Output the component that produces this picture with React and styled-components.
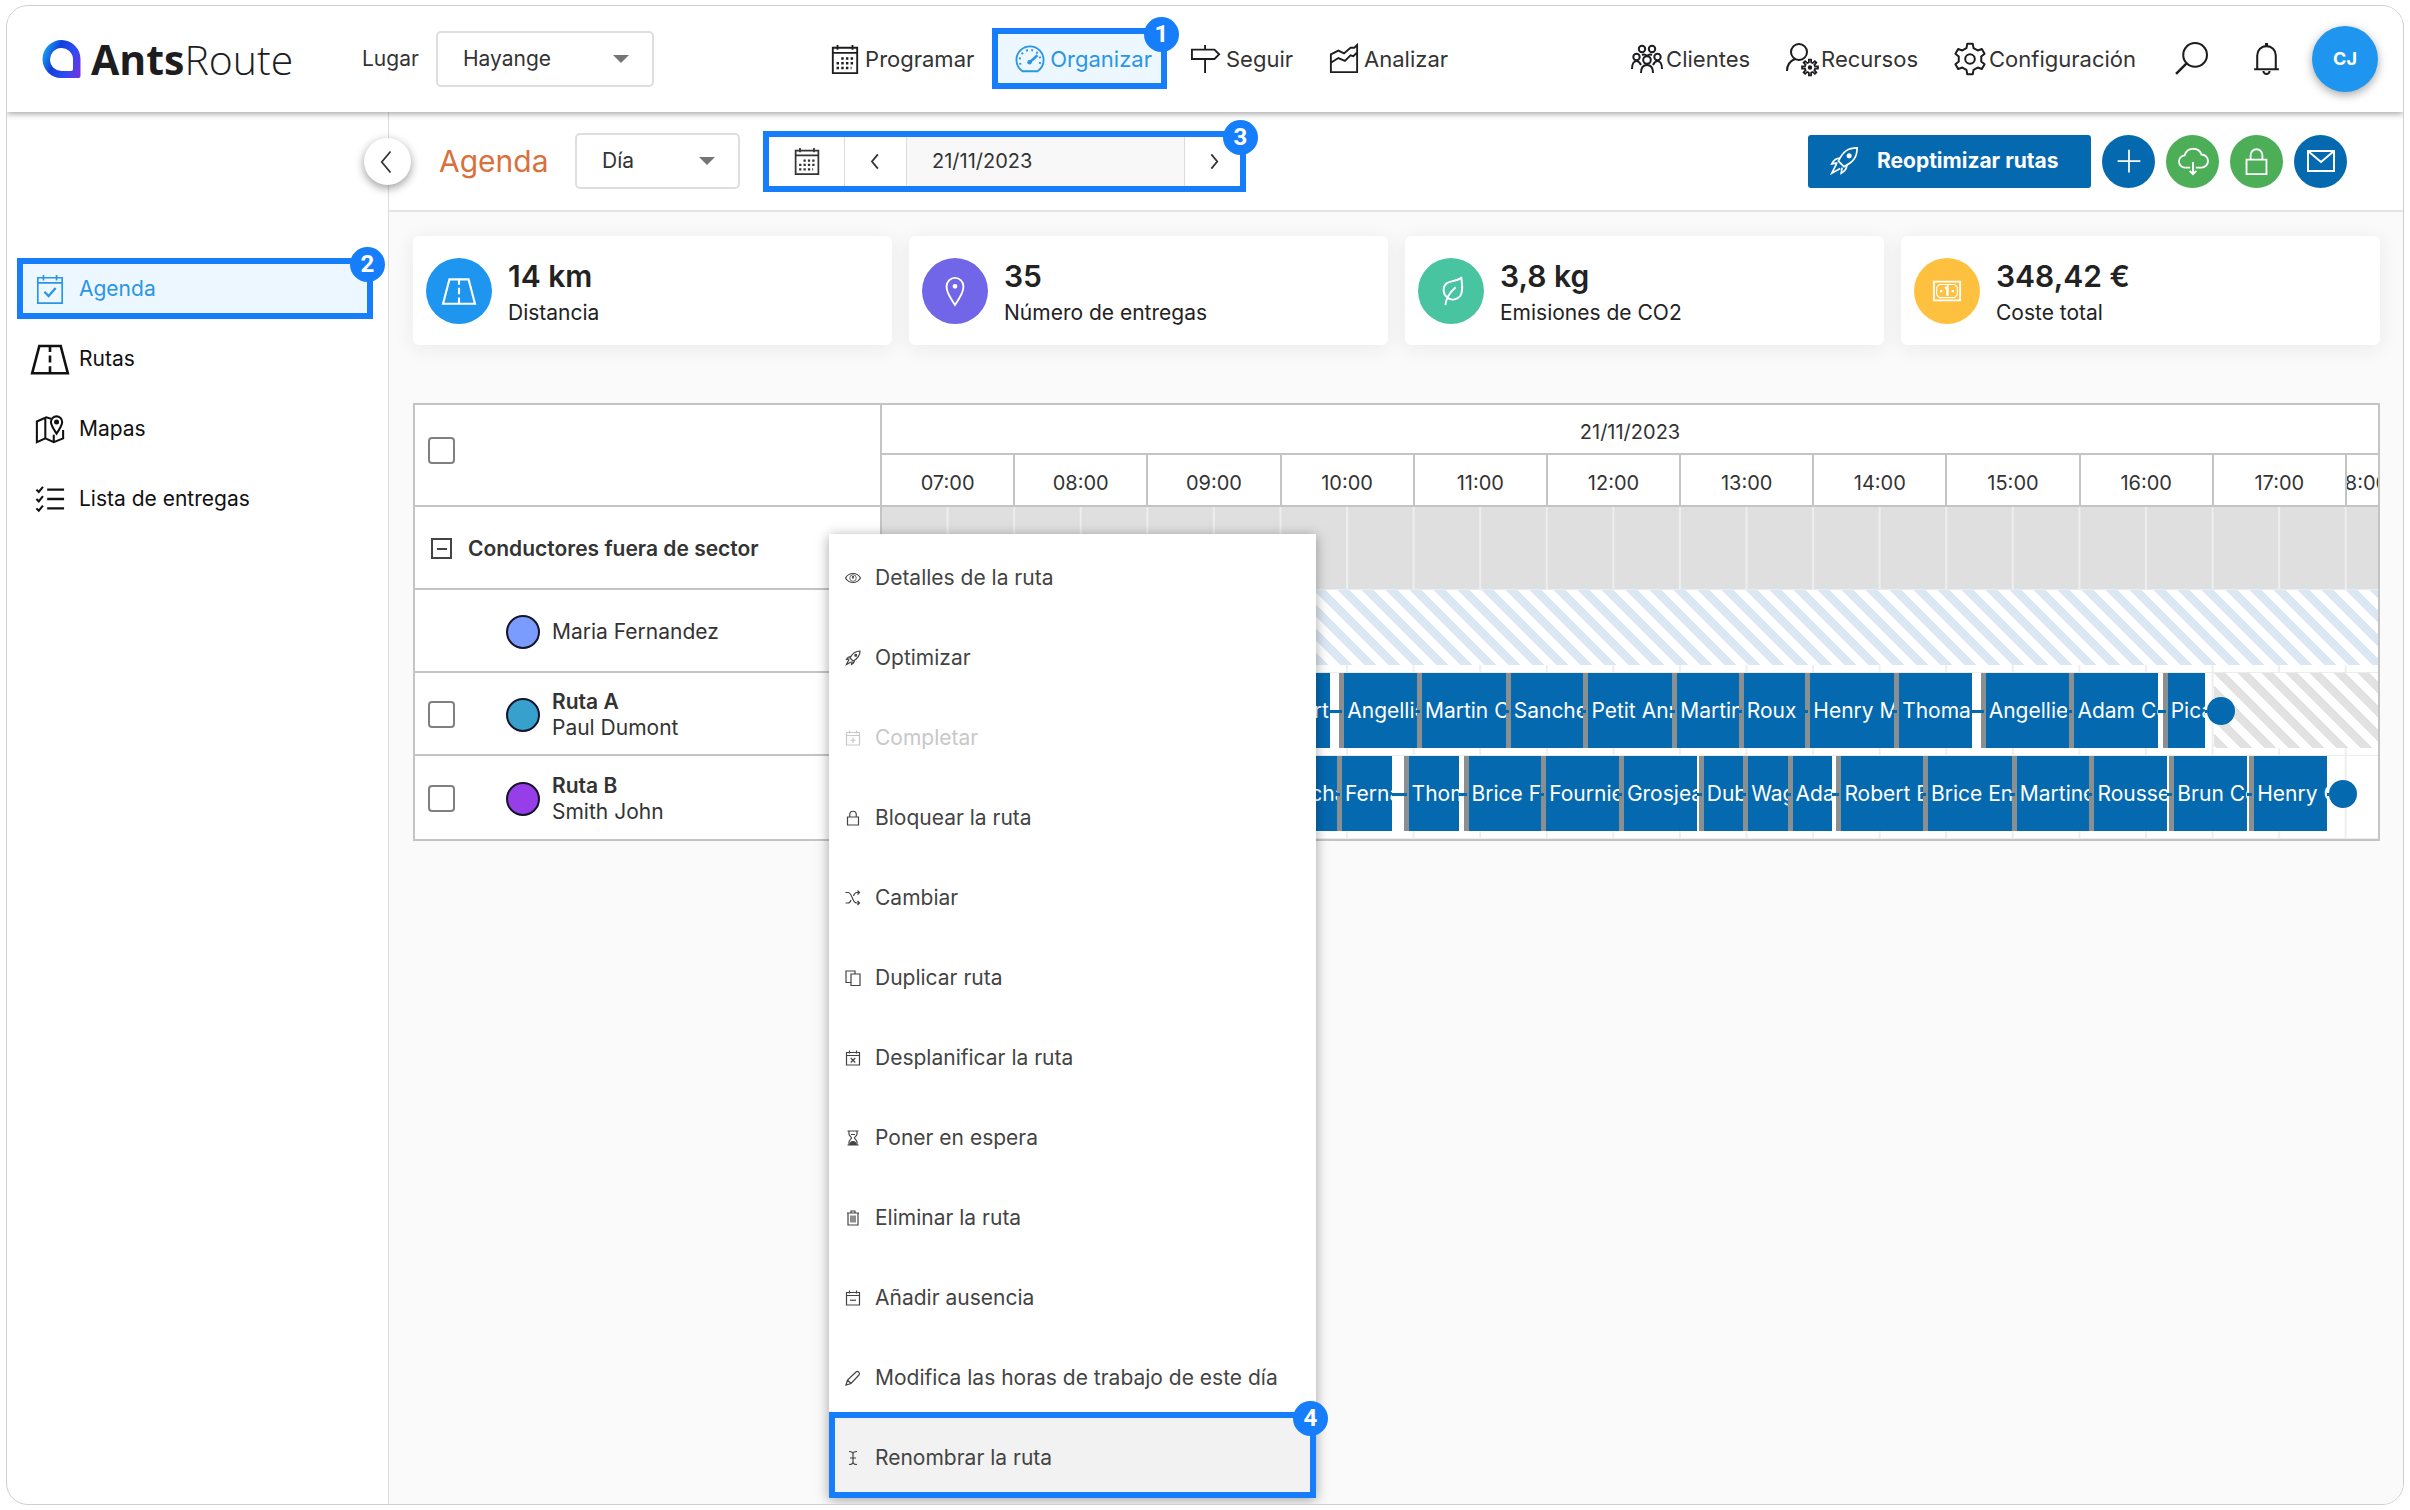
import React, { useState } from 'react';
import styled, { createGlobalStyle, css } from 'styled-components';

const BLUE = '#0569b0';
const ACCENT = '#167efb';
const LINE = '#c4c4c4';

// timeline starts at 07:00 and shows 674 minutes
const TOTAL_MINUTES = 674;
const pct = (minutes) => `${(minutes / TOTAL_MINUTES) * 100}%`;

const gearPath = (cx, cy, outer, inner, teeth) => {
  const points = [];
  const step = (Math.PI * 2) / teeth;
  for (let i = 0; i < teeth; i += 1) {
    const a = i * step - Math.PI / 2;
    [[-0.3, inner], [-0.17, outer], [0.17, outer], [0.3, inner]].forEach(([k, r]) => {
      points.push(`${(cx + r * Math.cos(a + k * step)).toFixed(2)} ${(cy + r * Math.sin(a + k * step)).toFixed(2)}`);
    });
  }
  return `M${points.join('L')}Z`;
};

const calendarFrame = (
  <>
    <path d="M3 5h26v25H3z" />
    <path d="M3 11h26M9 1v6M23 1v6" />
  </>
);

const icons = {
  calendar: (
    <>
      <path d="M3 4h26v27H3zM3 9.500h26M8 1v5M24 1v5" />
      <path d="M12 15.500h15M7 20.500h20M7 25.500h16" strokeDasharray="2.600 2.400" strokeWidth="2.600" />
    </>
  ),
  gauge: (
    <>
      <path d="M8 29C3.500 26 1.500 21.500 1.500 17a14.500 14.500 0 0 1 29 0c0 4.500-2 9-6.500 12z" />
      <path d="M6 22a11 11 0 1 1 20 0" strokeDasharray="2 3.800" strokeWidth="2.200" />
      <path d="M15 20l9-8" strokeWidth="2.600" />
      <circle cx="15.500" cy="19.500" r="2.400" fill="currentColor" stroke="none" />
    </>
  ),
  signpost: <path d="M1 6h24l5 5-5 5H1zM15 1v5M15 16v15" />,
  chart: <path d="M2 11l8-4 6 3 7-6 4 0 3-3v29H2zM2 20l8-5 7 3 6-6 3 1 4-4" />,
  group: (
    <>
      <circle cx="11" cy="6" r="3.200" />
      <circle cx="21" cy="6" r="3.200" />
      <circle cx="5.500" cy="14" r="3.200" />
      <circle cx="26.500" cy="14" r="3.200" />
      <circle cx="16" cy="17" r="3.800" />
      <path d="M1 26c0-5 2-8 4.500-8s3.500 2 4.500 4M31 26c0-5-2-8-4.500-8s-3.500 2-4.500 4M10 30c0-5 2-8 6-8s6 3 6 8M11 12c2-1 3-1 5 1M21 12c-2-1-3-1-5 1" />
    </>
  ),
  userCog: (
    <>
      <circle cx="13" cy="9" r="8" />
      <path d="M9 16C4 18 1 22 1 28" />
      <path d={gearPath(24, 24.5, 8, 5.2, 8)} strokeWidth="1.800" />
      <circle cx="24" cy="24.500" r="1.200" fill="currentColor" />
    </>
  ),
  cog: (
    <>
      <path d={gearPath(16, 16, 15.5, 11.5, 6)} strokeLinejoin="round" />
      <circle cx="16" cy="16" r="4.800" />
    </>
  ),
  search: (
    <>
      <circle cx="19.500" cy="12.500" r="11.500" />
      <path d="M11 21L1 31" strokeWidth="2.400" />
    </>
  ),
  bell: (
    <>
      <path d="M7 26V13a9 9 0 0 1 18 0v13M4 26.500h24M13 28a3 3 0 0 0 6 0" />
      <path d="M16 1v3" strokeWidth="3" />
    </>
  ),
  calendarCheck: (
    <>
      <path d="M3 4h26v27H3zM3 9.500h26M9 1v6M23 1v6" />
      <path d="M10 19l4.500 4.500L22 15" strokeWidth="2.400" />
    </>
  ),
  road: (
    <>
      <path d="M7 5h18l6 23H1z" />
      <path d="M16 5v5M16 13v6M16 22v6" />
    </>
  ),
  map: (
    <>
      <path d="M17 5l-5-1.500L2 8v22l9-4 9 4 10-4V17M11 5v21M20 22v8" />
      <path d="M23 21c-4-6-6-9-6-12.500a6 6 0 0 1 12 0C29 12 27 15 23 21z" />
      <circle cx="23" cy="8.500" r="1.600" fill="currentColor" />
    </>
  ),
  list: (
    <>
      <path d="M13 6h18M13 16h18M13 26h18" strokeWidth="2.600" />
      <path d="M1.500 6l2.500 2.500L8.500 3M1.500 16l2.500 2.500L8.500 13M1.500 26l2.500 2.500L8.500 23" />
    </>
  ),
  rocket: (
    <>
      <path d="M30 2C20 2 15 6 10 16l6 6C26 17 30 12 30 2z" />
      <circle cx="21.500" cy="10.500" r="1.800" fill="currentColor" />
      <path d="M12 13c-5 0-7 2-9 6l6-1M19 20c0 5-2 7-6 9l1-6M8 19l-5 10 9-5" />
    </>
  ),
  plus: <path d="M16 3v26M3 16h26" />,
  cloud: (
    <>
      <path d="M13 23H8a6.500 6.500 0 0 1-1-13 9.500 9.500 0 0 1 18-1 7 7 0 0 1 0 14h-6" />
      <path d="M16 17v13M12.500 26.500L16 30l3.500-3.500" />
    </>
  ),
  lock: <path d="M5 14h22v16H5zM9.500 14V9a6.500 6.500 0 0 1 13 0v5" />,
  mail: <path d="M3 6h26v20H3zM3 6l13 11L29 6" />,
  pin: (
    <>
      <path d="M16 31C9 20 7 16 7 11a9 9 0 0 1 18 0c0 5-2 9-9 20z" />
      <circle cx="16" cy="11" r="1.600" fill="currentColor" />
    </>
  ),
  leaf: (
    <path d="M27 2c1 8 2 14-1 19-3 4-9 6-14 2-5-4-5-11-1-15 4-3 10-2 16-6zM21 12c-7 6-10 11-11 19" />
  ),
  money: (
    <>
      <path d="M2 6h28v20H2z" />
      <path d="M8 9h16l3 3v8l-3 3H8l-3-3v-8z" strokeWidth="1.200" />
      <path d="M14 13.500l2.500-2V21" strokeWidth="2.600" />
      <path d="M8.500 16h2.500M21 16h2.500" strokeWidth="2.400" />
    </>
  ),
  eye: (
    <>
      <path d="M1 16C5 9 10 7 16 7s11 2 15 9c-4 7-9 9-15 9S5 23 1 16z" />
      <circle cx="16" cy="16" r="6.500" strokeWidth="1.600" />
      <path d="M16 12v5" strokeWidth="3.600" />
    </>
  ),
  calendarPlus: (
    <>
      {calendarFrame}
      <path d="M16 15v11M10.500 20.500h11" />
    </>
  ),
  calendarTimes: (
    <>
      {calendarFrame}
      <path d="M11.500 16l9 9M20.500 16l-9 9" />
    </>
  ),
  calendarMinus: (
    <>
      {calendarFrame}
      <path d="M10 20.500h12" />
    </>
  ),
  shuffle: (
    <path d="M1 5h5c9 0 8 21 17 21h6M1 26h5c3 0 5-3 6-6M17 12c1-4 3-7 7-7h5M25 1l4 4-4 4M25 22l4 4-4 4" />
  ),
  copy: <path d="M12 8h18v23H12zM12 25H2V2h18v6" />,
  hourglass: (
    <>
      <path d="M5 2h22M5 30h22M8 2v6c0 4 5 6 5 8s-5 4-5 8v6M24 2v6c0 4-5 6-5 8s5 4 5 8v6" />
      <path d="M10 29c0-4 3-6 6-6s6 2 6 6zM12 9h8" fill="currentColor" />
    </>
  ),
  trash: <path d="M4 6h24M12 5V2h8v3M6 6v24h20V6M12 11v14M16 11v14M20 11v14" />,
  pen: <path d="M2 30l3-10L22 4c3-4 9 2 6 6L12 27zM5 20l7 7" />,
  cursor: <path d="M8 3c4 0 8 1 8 5v16c0 4-4 5-8 5M24 3c-4 0-8 1-8 5M24 29c-4 0-8-1-8-5M10 16h12" />,
  left: <path d="M20 4L10 16l10 12" />,
  right: <path d="M14 4l10 12-10 12" />,
};

const Icon = ({ name, size = 32, weight = 2 }) => (
  <Svg viewBox="0 0 32 32" width={size} height={size} strokeWidth={weight} aria-hidden="true">
    {icons[name]}
  </Svg>
);

const Logo = () => (
  <LogoLink href="#inicio">
    <svg width="39" height="38" viewBox="0 0 39 38" aria-hidden="true">
      <defs>
        <linearGradient id="logo" x1="0" y1="0.3" x2="1" y2="0.7">
          <stop offset="0" stopColor="#17a6f2" />
          <stop offset="0.35" stopColor="#1240dc" />
          <stop offset="0.7" stopColor="#2b4cf5" />
          <stop offset="1" stopColor="#6a35e0" />
        </linearGradient>
      </defs>
      <path
        fill="url(#logo)"
        fillRule="evenodd"
        d="M19 38A19 19 0 1 1 38.500 19V36a2 2 0 0 1-2 2zM20 31h9a2 2 0 0 0 2-2V19a11.500 11.500 0 1 0-11 12z"
      />
    </svg>
    <LogoText><b>Ants</b>Route</LogoText>
  </LogoLink>
);

const mainLinks = [
  { icon: 'calendar', label: 'Programar' },
  { icon: 'gauge', label: 'Organizar', step: 1 },
  { icon: 'signpost', label: 'Seguir' },
  { icon: 'chart', label: 'Analizar' },
];

const accountLinks = [
  { icon: 'group', label: 'Clientes' },
  { icon: 'userCog', label: 'Recursos' },
  { icon: 'cog', label: 'Configuración' },
];

const sideLinks = [
  { icon: 'calendarCheck', label: 'Agenda', step: 2 },
  { icon: 'road', label: 'Rutas' },
  { icon: 'map', label: 'Mapas' },
  { icon: 'list', label: 'Lista de entregas' },
];

const stats = [
  { icon: 'road', color: '#1e96f0', value: '14 km', label: 'Distancia' },
  { icon: 'pin', color: '#7166e8', value: '35', label: 'Número de entregas' },
  { icon: 'leaf', color: '#48c4a0', value: '3,8 kg', label: 'Emisiones de CO2' },
  { icon: 'money', color: '#fdc13f', value: '348,42 €', label: 'Coste total' },
];

const hours = [7, 8, 9, 10, 11, 12, 13, 14, 15, 16, 17, 18];

// [start, end, customer] in minutes after 07:00
const routes = [
  {
    name: 'Ruta A',
    driver: 'Paul Dumont',
    color: '#38a0cc',
    end: 597,
    off: 600,
    stops: [
      [168, 202, 'Robert'],
      [206, 241, 'Angellier'],
      [241, 281, 'Martin Camille'],
      [281, 316, 'Sanchez'],
      [316, 356, 'Petit Anna'],
      [356, 386, 'Martin'],
      [386, 416, 'Roux'],
      [416, 456, 'Henry Marc'],
      [456, 491, 'Thomas'],
      [495, 535, 'Angellier'],
      [535, 575, 'Adam Céline'],
      [577, 596, 'Picard'],
    ],
  },
  {
    name: 'Ruta B',
    driver: 'Smith John',
    color: '#963ee8',
    end: 652,
    stops: [
      [181, 205, 'Richard'],
      [205, 230, 'Fernandez'],
      [235, 260, 'Thomas'],
      [262, 297, 'Brice Fabien'],
      [297, 332, 'Fournier'],
      [332, 367, 'Grosjean'],
      [368, 388, 'Dubois'],
      [388, 408, 'Wagner'],
      [408, 428, 'Adam'],
      [430, 469, 'Robert Elise'],
      [469, 509, 'Brice Enzo'],
      [509, 544, 'Martinez'],
      [544, 579, 'Rousseau'],
      [580, 615, 'Brun Céline'],
      [616, 651, 'Henry Claire'],
    ],
  },
];

const menuItems = [
  { icon: 'eye', label: 'Detalles de la ruta' },
  { icon: 'rocket', label: 'Optimizar' },
  { icon: 'calendarPlus', label: 'Completar', disabled: true },
  { icon: 'lock', label: 'Bloquear la ruta' },
  { icon: 'shuffle', label: 'Cambiar' },
  { icon: 'copy', label: 'Duplicar ruta' },
  { icon: 'calendarTimes', label: 'Desplanificar la ruta' },
  { icon: 'hourglass', label: 'Poner en espera' },
  { icon: 'trash', label: 'Eliminar la ruta' },
  { icon: 'calendarMinus', label: 'Añadir ausencia' },
  { icon: 'pen', label: 'Modifica las horas de trabajo de este día' },
  { icon: 'cursor', label: 'Renombrar la ruta', step: 4 },
];

const Header = () => (
  <TopBar>
    <TopGroup>
      <Logo />
      <FieldLabel htmlFor="lugar">Lugar</FieldLabel>
      <SelectBox $width={218}>
        <select id="lugar" defaultValue="Hayange">
          <option>Hayange</option>
        </select>
      </SelectBox>
    </TopGroup>
    <TopNav $gap={5} $main>
      {mainLinks.map(({ icon, label, step }) => (
        <NavLink key={label} href={`#${label}`} $active={!!step}>
          <Icon name={icon} size={30} />
          {label}
          {step && <StepBadge>{step}</StepBadge>}
        </NavLink>
      ))}
    </TopNav>
    <TopNav $gap={3}>
      {accountLinks.map(({ icon, label }) => (
        <NavLink key={label} href={`#${label}`}>
          <Icon name={icon} size={32} />
          {label}
        </NavLink>
      ))}
      <PlainButton aria-label="Buscar"><Icon name="search" size={33} /></PlainButton>
      <PlainButton aria-label="Notificaciones"><Icon name="bell" size={33} /></PlainButton>
      <Avatar>CJ</Avatar>
    </TopNav>
  </TopBar>
);

const Sidebar = () => (
  <Side>
    {sideLinks.map(({ icon, label, step }) => (
      <SideLink key={label} href={`#${label}`} $active={!!step}>
        <Icon name={icon} size={icon === 'road' ? 38 : 30} weight={step ? 1.8 : 2.2} />
        <span>{label}</span>
        {step && <StepBadge>{step}</StepBadge>}
      </SideLink>
    ))}
  </Side>
);

const Toolbar = () => {
  const [date, setDate] = useState('21/11/2023');

  return (
    <Bar>
      <Title>Agenda</Title>
      <SelectBox $width={165}>
        <select aria-label="Vista" defaultValue="Día">
          <option>Día</option>
        </select>
      </SelectBox>
      <DateGroup>
        <DateButton $width={76} aria-label="Calendario"><Icon name="calendar" size={28} /></DateButton>
        <DateButton $width={62} aria-label="Día anterior"><Icon name="left" size={19} weight={3} /></DateButton>
        <input aria-label="Fecha" value={date} onChange={(e) => setDate(e.target.value)} />
        <DateButton $width={56} aria-label="Día siguiente"><Icon name="right" size={19} weight={3} /></DateButton>
        <StepBadge>3</StepBadge>
      </DateGroup>
      <Actions>
        <PrimaryButton>
          <Icon name="rocket" size={30} weight={1.8} />
          Reoptimizar rutas
        </PrimaryButton>
        <RoundButton $color={BLUE} aria-label="Añadir"><Icon name="plus" size={28} /></RoundButton>
        <RoundButton $color="#4caf58" aria-label="Descargar"><Icon name="cloud" size={30} /></RoundButton>
        <RoundButton $color="#4caf58" aria-label="Bloquear"><Icon name="lock" size={29} /></RoundButton>
        <RoundButton $color={BLUE} aria-label="Enviar"><Icon name="mail" size={32} /></RoundButton>
      </Actions>
    </Bar>
  );
};

const RouteRow = ({ route }) => {
  const first = route.stops[0][0];

  return (
    <tr>
      <td>
        <Resource>
          <Check type="checkbox" aria-label={route.name} />
          <Dot $color={route.color} />
          <div>
            <b>{route.name}</b>
            <br />
            {route.driver}
          </div>
        </Resource>
      </td>
      <td>
        <Track>
          {route.off && (
            <Stripes $color="#e2e2e2" style={{ left: pct(route.off), width: pct(TOTAL_MINUTES - route.off) }} />
          )}
          <Connector style={{ left: pct(first), width: pct(route.end - first) }} />
          {route.stops.map(([start, end, name]) => (
            <Stop key={start} style={{ left: pct(start), width: pct(end - start) }}>
              <span>{name}</span>
            </Stop>
          ))}
          <EndPoint style={{ left: pct(route.end) }} />
        </Track>
      </td>
    </tr>
  );
};

const Planning = () => (
  <Gantt>
    <table>
      <colgroup>
        <ResourceCol />
        <col />
      </colgroup>
      <thead>
        <tr>
          <th rowSpan={2}>
            <Resource $head><Check type="checkbox" aria-label="Seleccionar todo" /></Resource>
          </th>
          <DateHead>21/11/2023</DateHead>
        </tr>
        <tr>
          <th>
            <Hours>
              {hours.map((h) => (
                <div key={h}><span>{`${String(h).padStart(2, '0')}:00`}</span></div>
              ))}
            </Hours>
          </th>
        </tr>
      </thead>
      <tbody>
        <tr>
          <td>
            <Resource>
              <Collapse aria-label="Contraer" />
              <b>Conductores fuera de sector</b>
            </Resource>
          </td>
          <td><Track $group /></td>
        </tr>
        <tr>
          <td>
            <Resource $indent>
              <Dot $color="#7a9cff" />
              Maria Fernandez
            </Resource>
          </td>
          <td>
            <Track>
              <Stripes $color="#dbe8f3" style={{ left: 0, width: '100%' }} />
            </Track>
          </td>
        </tr>
        {routes.map((route) => <RouteRow key={route.name} route={route} />)}
      </tbody>
    </table>
  </Gantt>
);

const App = () => (
  <>
    <GlobalStyle />
    <Frame>
      <Header />
      <Body>
        <Sidebar />
        <Main>
          <FoldButton aria-label="Plegar menú"><Icon name="left" size={28} /></FoldButton>
          <Toolbar />
          <Content>
            <Cards>
              {stats.map(({ icon, color, value, label }) => (
                <Card key={label}>
                  <CardIcon $color={color}><Icon name={icon} size={icon === 'road' ? 34 : 30} /></CardIcon>
                  <CardBody>
                    <CardValue>{value}</CardValue>
                    <CardLabel>{label}</CardLabel>
                  </CardBody>
                </Card>
              ))}
            </Cards>
            <Planning />
          </Content>
          <Menu role="menu">
            {menuItems.map(({ icon, label, disabled, step }) => (
              <MenuItem key={label} role="menuitem" disabled={disabled} $active={!!step}>
                <Icon name={icon} size={16} weight={2.4} />
                {label}
                {step && <StepBadge>{step}</StepBadge>}
              </MenuItem>
            ))}
          </Menu>
        </Main>
      </Body>
    </Frame>
  </>
);

export default App;


const GlobalStyle = createGlobalStyle`
  * {
    box-sizing: border-box;
  }
  body {
    margin: 0;
    background: #fff;
    color: #333;
    font-family: Inter, 'Open Sans', sans-serif;
    font-size: 21px;
    line-height: 26px;
  }
  button, input, select {
    font: inherit;
    color: inherit;
  }
  button {
    border: 0;
    padding: 0;
    background: none;
    cursor: pointer;
  }
  a {
    color: inherit;
    text-decoration: none;
  }
  b {
    font-weight: 600;
  }
`;

const Svg = styled.svg`
  flex: none;
  display: block;
  fill: none;
  stroke: currentColor;
  overflow: visible;
`;

const Frame = styled.div`
  display: flex;
  flex-direction: column;
  min-height: calc(100vh - 10px);
  margin: 5px 6px;
  border: 1px solid #cfcfcf;
  border-radius: 22px;
  overflow: hidden;
`;

const highlight = css`
  border: 6px solid ${ACCENT};
`;

const StepBadge = styled.span`
  position: absolute;
  top: -17px;
  right: -18px;
  z-index: 2;
  width: 35px;
  height: 35px;
  border-radius: 50%;
  background: ${ACCENT};
  color: #fff;
  font: 700 24px/35px Roboto, sans-serif;
  text-align: center;
`;

const TopBar = styled.header`
  position: relative;
  z-index: 1;
  display: flex;
  align-items: center;
  justify-content: space-between;
  height: 106px;
  padding: 0 25px 1px 35px;
  background: #fff;
  box-shadow: 0 2px 6px rgba(0, 0, 0, 0.35);
`;

const TopGroup = styled.div`
  display: flex;
  align-items: center;
`;

const LogoLink = styled.a`
  display: flex;
  align-items: center;
  gap: 10px;
  width: 320px;
  color: #1d1d1f;
`;

const LogoText = styled.span`
  font: 300 41px/48px 'Open Sans', sans-serif;

  b {
    font-weight: 700;
  }
`;

const FieldLabel = styled.label`
  width: 74px;
`;

const SelectBox = styled.div`
  position: relative;
  width: ${({ $width }) => $width}px;

  select {
    width: 100%;
    height: 56px;
    padding: 0 25px;
    border: 2px solid #dedede;
    border-radius: 5px;
    background: #fff;
    appearance: none;
  }

  &::after {
    content: '';
    position: absolute;
    top: 24px;
    right: 25px;
    border: 8px solid transparent;
    border-top-color: #757575;
    border-bottom: 0;
    pointer-events: none;
  }
`;

const NavLink = styled.a`
  position: relative;
  display: flex;
  align-items: center;
  height: 61px;
  padding: 0 18px;
  font-size: 22px;

  svg {
    color: #1d1d1f;
  }

  ${({ $active }) => $active && css`
    ${highlight}
    margin-right: 6px;
    padding: 0 9px 0 17px;
    background: #ecf7ff;
    color: #2b95e6;

    svg {
      color: inherit;
    }
  `}
`;

const TopNav = styled.nav`
  display: flex;
  align-items: center;
  margin-left: ${({ $main }) => ($main ? 11 : 0)}px;

  ${NavLink} {
    gap: ${({ $gap }) => $gap}px;
  }
`;

const PlainButton = styled.button`
  padding: 0 21px;
  color: #1d1d1f;
`;

const Avatar = styled.button`
  width: 66px;
  height: 66px;
  margin-left: 8px;
  border-radius: 50%;
  background: #1e96f0;
  box-shadow: 0 3px 10px rgba(0, 0, 0, 0.35);
  color: #fff;
  font-size: 18px;
  font-weight: 700;
`;

const Body = styled.div`
  flex: 1;
  display: grid;
  grid-template-columns: 382px 1fr;
`;

const Side = styled.nav`
  display: flex;
  flex-direction: column;
  gap: 9px;
  padding: 146px 15px 0 10px;
  border-right: 1px solid #dcdcdc;
`;

const SideLink = styled.a`
  position: relative;
  display: flex;
  align-items: center;
  gap: 10px;
  height: 61px;
  padding-left: 14px;
  color: #111;

  svg {
    width: 38px;
  }

  ${({ $active }) => $active && css`
    ${highlight}
    padding-left: 8px;
    background: #ecf7ff;
    color: #2b95e6;
  `}
`;

const Main = styled.main`
  position: relative;
  background: #fafafa;
`;

const FoldButton = styled.button`
  position: absolute;
  top: 26px;
  left: -25px;
  z-index: 1;
  display: flex;
  align-items: center;
  justify-content: center;
  width: 47px;
  height: 47px;
  padding-right: 2px;
  border-radius: 50%;
  background: #fff;
  box-shadow: 0 3px 10px rgba(0, 0, 0, 0.4);
`;

const Bar = styled.div`
  display: flex;
  align-items: center;
  height: 100px;
  padding: 0 56px 0 50px;
  border-bottom: 2px solid #e4e4e4;
  background: #fff;
`;

const Title = styled.h1`
  width: 136px;
  margin: 0;
  color: #d9703c;
  font-size: 30px;
  font-weight: 400;
`;

const DateGroup = styled.div`
  ${highlight}
  position: relative;
  display: flex;
  width: 483px;
  height: 61px;
  margin-left: 23px;

  input {
    flex: 1;
    min-width: 0;
    padding: 0 25px;
    border: 0;
    background: #f8f8f8;
    font-size: 20px;
  }
`;

const DateButton = styled.button`
  display: flex;
  align-items: center;
  justify-content: center;
  width: ${({ $width }) => $width}px;
  border-right: 1px solid #dcdcdc;

  input + & {
    border-right: 0;
    border-left: 1px solid #dcdcdc;
  }
`;

const Actions = styled.div`
  display: flex;
  gap: 11px;
  margin-left: auto;
`;

const PrimaryButton = styled.button`
  display: flex;
  align-items: center;
  gap: 18px;
  width: 283px;
  height: 53px;
  padding-left: 21px;
  border-radius: 3px;
  background: ${BLUE};
  color: #fff;
  font-weight: 700;
`;

const RoundButton = styled.button`
  display: flex;
  align-items: center;
  justify-content: center;
  width: 53px;
  height: 53px;
  border-radius: 50%;
  background: ${({ $color }) => $color};
  color: #fff;
`;

const Content = styled.div`
  padding: 24px 23px 24px 24px;
`;

const Cards = styled.div`
  display: grid;
  grid-template-columns: repeat(4, 1fr);
  gap: 17px;
`;

const Card = styled.section`
  display: flex;
  align-items: center;
  gap: 16px;
  height: 109px;
  padding: 0 13px;
  border-radius: 6px;
  background: #fff;
  box-shadow: 0 3px 20px rgba(40, 40, 80, 0.08);
`;

const CardIcon = styled.div`
  display: flex;
  align-items: center;
  justify-content: center;
  width: 66px;
  height: 66px;
  border-radius: 50%;
  background: ${({ $color }) => $color};
  color: #fff;
`;

const CardBody = styled.div`
  padding-top: 2px;
`;

const CardValue = styled.div`
  color: #222;
  font-size: 30px;
  font-weight: 600;
  line-height: 36px;
`;

const CardLabel = styled.div`
  margin-top: 6px;
  color: #222;
`;

const Gantt = styled.section`
  margin-top: 58px;
  border: 2px solid ${LINE};
  background: #fff;

  table {
    width: 100%;
    table-layout: fixed;
    border-collapse: separate;
    border-spacing: 0;
  }

  th, td {
    padding: 0;
    font-weight: 400;
    text-align: left;
  }

  th {
    border-bottom: 2px solid ${LINE};
    vertical-align: top;
  }

  th:first-child[rowspan], td:first-child {
    border-right: 2px solid ${LINE};
  }

  td:first-child {
    border-bottom: 2px solid ${LINE};
  }

  tr:last-child td:first-child {
    border-bottom: 0;
  }
`;

const ResourceCol = styled.col`
  width: 467px;
`;

const DateHead = styled.th`
  height: 50px;
  font-size: 20px;

  && {
    padding-top: 14px;
    text-align: center;
  }
`;

const Hours = styled.div`
  display: grid;
  grid-template-columns: repeat(11, 60fr) 14fr;
  height: 50px;
  font-size: 20px;

  div {
    display: flex;
    align-items: center;
    justify-content: center;
    min-width: 0;
    padding-top: 5px;
    overflow: hidden;
    border-right: 2px solid ${LINE};
  }

  div:last-child {
    border-right: 0;
  }
`;

const Resource = styled.div`
  display: flex;
  align-items: center;
  height: ${({ $head }) => ($head ? 88 : 81)}px;
  padding-top: 2px;
  padding-left: ${({ $indent }) => ($indent ? 91 : 13)}px;
`;

const Check = styled.input`
  flex: none;
  width: 27px;
  height: 27px;
  margin: 0 51px 0 0;
  border: 2px solid #808080;
  border-radius: 4px;
  background: #fff;
  appearance: none;
`;

const Collapse = styled.button`
  display: flex;
  align-items: center;
  justify-content: center;
  width: 21px;
  height: 21px;
  margin: 0 16px 0 3px;
  border: 2px solid #444;

  &::after {
    content: '';
    width: 10px;
    height: 2px;
    background: #444;
  }
`;

const Dot = styled.span`
  flex: none;
  width: 34px;
  height: 34px;
  margin-right: 12px;
  border: 2px solid #14142a;
  border-radius: 50%;
  background: ${({ $color }) => $color};
`;

const Track = styled.div`
  position: relative;
  height: 83px;
  border-bottom: 1px solid #ececec;
  background: linear-gradient(90deg, transparent calc(100% - 2px), #eee 0) 0 0 / calc(100% * 30 / ${TOTAL_MINUTES}) 100%;
  background-color: ${({ $group }) => ($group ? '#dfdfdf' : '#fff')};
  overflow: hidden;
`;

const Stripes = styled.div`
  position: absolute;
  top: 0;
  height: 75px;
  background: ${({ $color }) => css`
    linear-gradient(45deg, ${$color} 25%, #fff 25%, #fff 50%, ${$color} 50%, ${$color} 75%, #fff 75%)
  `};
  background-size: 24px 24px;
`;

const Connector = styled.div`
  position: absolute;
  top: 37px;
  height: 3px;
  background: ${BLUE};
`;

const Stop = styled.div`
  position: absolute;
  top: 0;
  height: 75px;
  border-left: 5px solid #8a8f92;
  background: ${BLUE};
  color: #fff;

  span {
    display: block;
    padding-left: 3px;
    line-height: 75px;
    white-space: nowrap;
    overflow: hidden;
  }

  &::before {
    content: '';
    position: absolute;
    top: 37px;
    left: -7px;
    width: 5px;
    height: 3px;
    background: ${BLUE};
  }
`;

const EndPoint = styled.div`
  position: absolute;
  top: 24px;
  width: 28px;
  height: 28px;
  border-radius: 50%;
  background: ${BLUE};
`;

const Menu = styled.div`
  position: absolute;
  top: 422px;
  left: 440px;
  z-index: 2;
  display: flex;
  flex-direction: column;
  width: 487px;
  padding-top: 4px;
  background: #fff;
  box-shadow: 0 2px 12px rgba(0, 0, 0, 0.35);
`;

const MenuItem = styled.button`
  position: relative;
  display: flex;
  align-items: center;
  gap: 14px;
  height: 80px;
  padding-left: 16px;
  color: #444;

  &:disabled {
    color: #c8c8c8;
  }

  ${({ $active }) => $active && css`
    ${highlight}
    height: 86px;
    margin-top: -6px;
    padding: 6px 0 0 10px;
    background: #f2f2f2;
  `}
`;
